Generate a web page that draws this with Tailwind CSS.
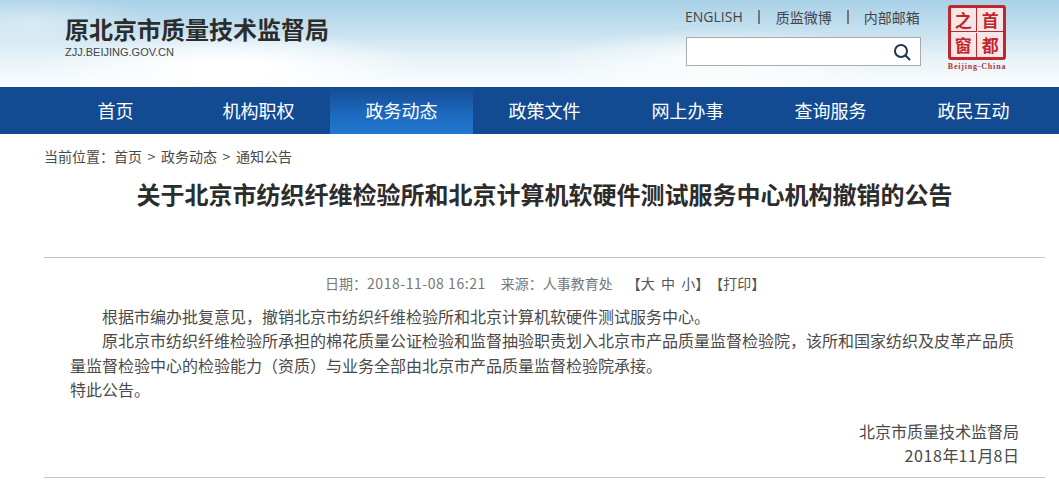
<!DOCTYPE html>
<html lang="zh-CN">
<head>
    <meta charset="UTF-8">
    <title>关于北京市纺织纤维检验所和北京计算机软硬件测试服务中心机构撤销的公告</title>
    <script src="https://cdn.jsdelivr.net/npm/@tailwindcss/browser@4"></script>
</head>
<body class="w-[1059px] h-[487px] overflow-hidden bg-white font-['Noto_Sans_CJK_SC','Noto_Sans',sans-serif] text-[#4a4a4a]">
    <!-- Header -->
    <header class="relative h-[87px] flex justify-between overflow-hidden bg-[linear-gradient(180deg,#a9d1e7_0%,#c5e0ef_35%,#e6f2f8_65%,#fbfdfe_100%)]">
        <div class="absolute inset-0 bg-[radial-gradient(ellipse_190px_40px_at_230px_70px,#ffffff_20%,transparent_100%),radial-gradient(ellipse_170px_34px_at_720px_62px,#ffffffcc_10%,transparent_100%),radial-gradient(ellipse_120px_30px_at_30px_22px,#ffffff66_0%,transparent_100%)]"></div>
        <div class="relative pl-[65px] pt-[14px]">
            <h1 class="text-[24px] leading-[30px] font-bold text-[#2c2c2c]">原北京市质量技术监督局</h1>
            <p class="mt-[1px] text-[11px] leading-[14px] text-[#444] font-['Liberation_Sans',sans-serif]">ZJJ.BEIJING.GOV.CN</p>
        </div>
        <div class="relative flex pr-[51px]">
            <div class="w-[235px] pt-[7px] mr-[25px]">
                <div class="h-[20px] flex items-center text-[14px] leading-[20px] text-[#444] whitespace-nowrap">
                    <span class="font-['Open_Sans',sans-serif] -ml-[1px]">ENGLISH</span>
                    <span class="w-[2px] h-[14px] bg-[#777] ml-[15px] mr-[16px]"></span>
                    <span>质监微博</span>
                    <span class="w-[2px] h-[14px] bg-[#777] ml-[15px] mr-[15px]"></span>
                    <span>内部邮箱</span>
                </div>
                <div class="mt-[10px] h-[29px] bg-white border border-[#aaa] flex items-center justify-end pr-[9px]">
                    <svg class="w-[18px] h-[18px]" viewBox="0 0 18 18" fill="none" stroke="#1c3550" stroke-width="2">
                        <circle cx="8" cy="8" r="6"/>
                        <path d="M12.5 12.5L16.5 16.5" stroke-linecap="round"/>
                    </svg>
                </div>
            </div>
            <!-- Seal -->
            <div class="w-[62px] pt-[5px] flex flex-col items-center">
                <div class="w-[58px] h-[55px] rounded-[3px] border-[3px] border-[#c0272d] bg-[#f7e6e6] grid grid-cols-2 grid-rows-2 gap-[1px] text-[#c0272d] text-[17px] leading-[24px] text-center font-bold">
                    <span class="border-r border-b border-[#c0272d]">之</span>
                    <span class="border-b border-[#c0272d]">首</span>
                    <span class="border-r border-[#c0272d]">窗</span>
                    <span>都</span>
                </div>
                <span class="mt-[2px] text-[8px] leading-[10px] font-bold tracking-[0.8px] whitespace-nowrap text-[#b5323a] font-['Liberation_Serif',serif]">Beijing-China</span>
            </div>
        </div>
    </header>

    <!-- Nav -->
    <nav class="h-[47px] bg-[#134b93] pl-[44px] flex text-white text-[18px] leading-[47px] text-center">
        <a class="w-[143px]">首页</a>
        <a class="w-[143px]">机构职权</a>
        <a class="w-[143px] bg-[linear-gradient(180deg,#134b93_0%,#1d68bd_55%,#2277d2_100%)]">政务动态</a>
        <a class="w-[143px]">政策文件</a>
        <a class="w-[143px]">网上办事</a>
        <a class="w-[143px]">查询服务</a>
        <a class="w-[143px]">政民互动</a>
    </nav>

    <!-- Article -->
    <main class="mx-[44px] w-[1001px]">
        <div class="pt-[13px] flex text-[14px] leading-[18px] whitespace-nowrap">
            <span>当前位置：</span>
            <span>首页</span>
            <span class="w-[19px] text-center">&gt;</span>
            <span>政务动态</span>
            <span class="w-[19px] text-center">&gt;</span>
            <span>通知公告</span>
        </div>
        <h2 class="mt-[12px] text-[24px] leading-[34px] font-bold text-center text-[#2c2c2c]">关于北京市纺织纤维检验所和北京计算机软硬件测试服务中心机构撤销的公告</h2>
        <div class="mt-[46px] border-t border-[#c4c4c4] pt-[15px] h-[47px] flex text-[14px] leading-[20px] text-[#777] whitespace-nowrap pl-[281px]">
            <span>日期：<span class="tracking-[0.55px]">2018-11-08 16:21</span></span>
            <span class="ml-[15px]">来源：人事教育处</span>
            <span class="ml-[14px] text-[#555]">【大&nbsp;&nbsp;中&nbsp;&nbsp;小】</span>
            <span class="text-[#555]">【打印】</span>
        </div>
        <div class="px-[26px] text-[16px] leading-[24.4px]">
            <p class="indent-[2em]">根据市编办批复意见，撤销北京市纺织纤维检验所和北京计算机软硬件测试服务中心。</p>
            <p class="indent-[2em]">原北京市纺织纤维检验所承担的棉花质量公证检验和监督抽验职责划入北京市产品质量监督检验院，该所和国家纺织及皮革产品质量监督检验中心的检验能力（资质）与业务全部由北京市产品质量监督检验院承接。</p>
            <p>特此公告。</p>
            <p class="mt-[17px] text-right">北京市质量技术监督局</p>
            <p class="text-right"><span class="tracking-[0.6px]">2018</span>年<span class="tracking-[0.6px]">11</span>月<span class="tracking-[0.6px]">8</span>日</p>
        </div>
        <div class="mt-[10px] border-t border-[#c4c4c4]"></div>
    </main>
</body>
</html>
